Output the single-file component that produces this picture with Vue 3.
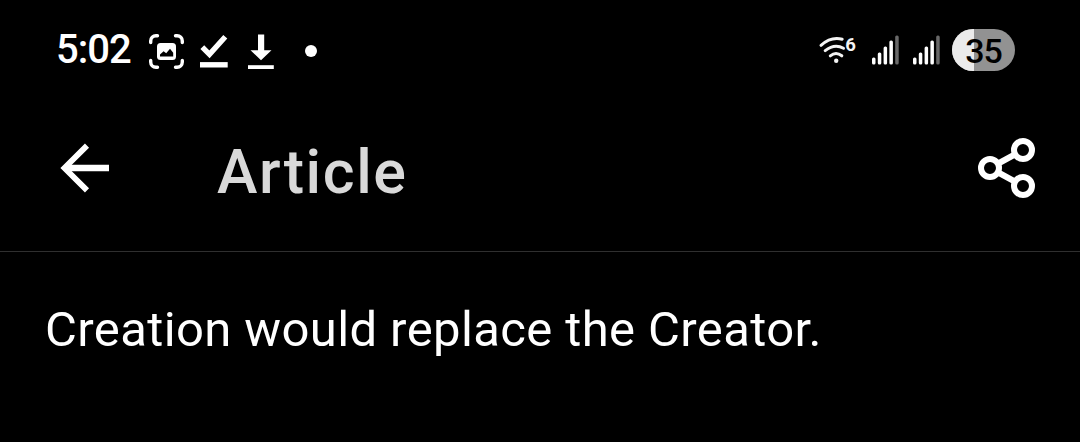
<template>
  <div class="screen">
    <div class="status">
      <span class="status__time">5:02</span>
      <svg class="status__notifications" width="176" height="40" viewBox="146 30 176 40" fill="none" stroke="#fff">
        <g stroke-width="3.4" stroke-linecap="round">
          <path d="M150.7 42.5V41a5.2 5.2 0 0 1 5.2-5.2h1.6M175.5 35.8h1.6a5.2 5.2 0 0 1 5.2 5.2v1.5M182.3 60.5V62a5.2 5.2 0 0 1-5.2 5.2h-1.6M157.5 67.2h-1.6a5.2 5.2 0 0 1-5.2-5.2v-1.5" />
        </g>
        <rect x="157" y="43" width="19" height="17" rx="3.5" fill="#fff" stroke="none" />
        <path d="M160 56.5v-2l3.6-3.2 2.6 1.9 3.8-4.4 3.2 4v3.7z" fill="#000" stroke="none" />
        <path d="M202.3 47.2l7.2 7.2L225.3 36.8" stroke-width="5.4" />
        <path d="M200 64.8h27.7" stroke-width="5.4" />
        <path d="M258 34.5h6.2v15.8h7.3L261 60.2l-10.5-9.9h7.5z" fill="#fff" stroke="none" />
        <path d="M248 67.1h25.8" stroke-width="3.8" />
        <circle cx="311" cy="51" r="6" fill="#fff" stroke="none" />
      </svg>
      <div class="status__system">
        <svg width="40" height="32" viewBox="818 32 40 32" fill="none" stroke="#f4f4f4">
          <path d="M821 43.3Q831 34.2 842.2 37.2M825.2 48.6Q834.5 41.2 843.5 46.2M830.3 53.8Q836 49.2 841.8 53.8" stroke-width="3" stroke-linecap="round" />
          <circle cx="836.2" cy="58.7" r="2.2" fill="#f4f4f4" stroke="none" />
          <text class="wifi-band" x="845.2" y="49.3">6</text>
        </svg>
        <svg
          v-for="sim in 2"
          :key="sim"
          class="signal"
          width="27"
          height="30"
          viewBox="0 0 27 30"
        >
          <rect
            v-for="bar in bars"
            :key="bar.x"
            :x="bar.x"
            :y="29.5 - bar.h"
            width="3.5"
            :height="bar.h"
            rx="1.5"
            :fill="bar.on ? '#fff' : '#696969'"
          />
        </svg>
        <div class="battery">
          <div class="battery__fill" :style="{ width: `${battery}%` }" />
          <span class="battery__value">{{ battery }}</span>
        </div>
      </div>
    </div>

    <header class="header">
      <svg width="50" height="50" viewBox="60 143 50 50" fill="none" stroke="#fff">
        <path d="M87 145.6L64.5 168 87 190.4" stroke-width="5.8" />
        <path d="M66 168h43" stroke-width="6.4" />
      </svg>
      <h1 class="header__title">Article</h1>
      <svg class="header__share" width="60" height="62" viewBox="977 137 60 62" fill="none" stroke="#fff">
        <path d="M990 168l33-18M990 168l33 18" stroke-width="6" />
        <g fill="#000" stroke-width="6">
          <circle cx="990" cy="168" r="9" />
          <circle cx="1023" cy="150" r="9" />
          <circle cx="1023" cy="186" r="9" />
        </g>
      </svg>
    </header>

    <p class="content">Creation would replace the Creator.</p>
  </div>
</template>

<script setup>
const battery = 35

const bars = [
  { x: 0, h: 7, on: true },
  { x: 5.8, h: 12, on: true },
  { x: 11.6, h: 18, on: true },
  { x: 17.4, h: 24, on: true },
  { x: 23.2, h: 29, on: false },
]
</script>

<style>
body {
  margin: 0;
  background: #000;
}
</style>

<style scoped>
.screen {
  box-sizing: border-box;
  height: 442px;
  overflow: hidden;
  background: #000;
  color: #fff;
  font-family: Roboto, sans-serif;
}

.status {
  display: flex;
  align-items: center;
  box-sizing: border-box;
  height: 100px;
  padding: 0 65px 0 56px;
}

.status__time {
  width: 90px;
  font-size: 40px;
  font-weight: 500;
  line-height: 48px;
  letter-spacing: -1px;
  white-space: nowrap;
}

.status__system {
  display: flex;
  align-items: center;
  margin-left: auto;
}

.wifi-band {
  fill: #f4f4f4;
  stroke: none;
  font-size: 18.5px;
  font-weight: 700;
}

.signal {
  margin-left: 14px;
}

.battery {
  position: relative;
  width: 63px;
  height: 42px;
  margin-left: 12px;
  overflow: hidden;
  border-radius: 21px;
  background: #929292;
}

.battery__fill {
  height: 100%;
  background: #ebebeb;
}

.battery__value {
  position: absolute;
  inset: 0;
  color: #000;
  font-size: 34px;
  font-weight: 500;
  line-height: 44px;
  letter-spacing: -1px;
  text-align: center;
}

.header {
  display: flex;
  align-items: center;
  box-sizing: border-box;
  height: 152px;
  padding: 0 43px 16px 60px;
  border-bottom: 1px solid #2f2f2f;
}

.header__title {
  margin: 9px 0 0 107px;
  color: #d9d9d9;
  font-size: 61px;
  font-weight: 500;
  line-height: 70px;
  letter-spacing: 1.6px;
}

.header__share {
  margin-left: auto;
}

.content {
  margin: 0;
  padding: 48px 45px;
  font-size: 49px;
  line-height: 60px;
  letter-spacing: 0.39px;
  white-space: nowrap;
}
</style>
